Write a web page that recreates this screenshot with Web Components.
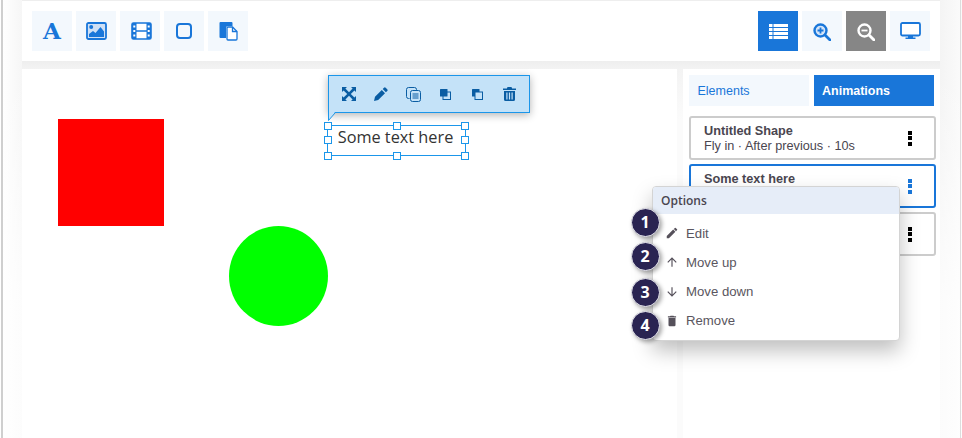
<!DOCTYPE html>
<html><head><meta charset="utf-8"><style>
html,body{margin:0;height:100%;overflow:hidden}
body{background:#fff;font-family:"Liberation Sans",sans-serif;color:#4a4650}
</style></head><body>
<x-app></x-app>
<script>
const I={
image:'<svg viewBox="0 0 21 18" width="21" height="18" style="margin-left:1px"><rect x="1" y="1" width="19" height="16" rx="1.500" fill="#cfe0f5" stroke="#1976d9" stroke-width="1.800"/><circle cx="5.200" cy="5" r="2" fill="#1976d9"/><path d="M3 15v-3l4-3 2.500 2 5-6L18 9.500V15z" fill="#1976d9"/></svg>',
film:'<svg viewBox="0 0 21 18" width="21" height="18" style="margin-left:2px"><rect x="1" y="1" width="19" height="16" rx="1.500" fill="#fff" stroke="#1976d9" stroke-width="1.600"/><path d="M1 1h4.500v16H1zM15.500 1H20v16h-4.500zM5 8.200h11v1.600H5z" fill="#1976d9"/><path d="M2.300 3.500h2v2h-2zM2.300 8h2v2h-2zM2.300 12.500h2v2h-2zM16.700 3.500h2v2h-2zM16.700 8h2v2h-2zM16.700 12.500h2v2h-2z" fill="#fff"/></svg>',
square:'<svg viewBox="0 0 16 16" width="16" height="16"><rect x="1" y="1" width="14" height="14" rx="3" fill="none" stroke="#1976d9" stroke-width="2"/></svg>',
paste:'<svg viewBox="0 0 19 20" width="19" height="20"><path d="M1.500 1h11a1 1 0 0 1 1 1v3H9a2 2 0 0 0-2 2v10H1.500a1 1 0 0 1-1-1V2a1 1 0 0 1 1-1z" fill="#1976d9"/><path d="M8 7a1 1 0 0 1 1-1h4.500L18 10.500V18a1 1 0 0 1-1 1H9a1 1 0 0 1-1-1z" fill="#fff" stroke="#1976d9" stroke-width="1.300"/><path d="M13.500 6v4.500H18" fill="none" stroke="#1976d9" stroke-width="1.300"/></svg>',
list:'<svg viewBox="0 0 19 15" width="19" height="15" fill="#fff"><path d="M0 0h3.500v3H0zM4.500 0H19v3H4.500zM0 4h3.500v3H0zM4.500 4H19v3H4.500zM0 8h3.500v3H0zM4.500 8H19v3H4.500zM0 12h3.500v3H0zM4.500 12H19v3H4.500z"/></svg>',
zoomin:'<svg viewBox="0 0 18 18" width="18" height="18" style="margin-top:2px"><circle cx="7.500" cy="7.500" r="6" fill="#d5e5f8" stroke="#1976d9" stroke-width="2.400"/><path d="M12 12l5 5" stroke="#1976d9" stroke-width="2.800" stroke-linecap="round"/><path d="M4.500 7.500h6M7.500 4.500v6" stroke="#1976d9" stroke-width="1.800"/></svg>',
zoomout:'<svg viewBox="0 0 18 18" width="18" height="18" style="margin-top:2px"><circle cx="7.500" cy="7.500" r="6" fill="#8a8a8a" stroke="#fff" stroke-width="2.400"/><path d="M12 12l5 5" stroke="#fff" stroke-width="2.800" stroke-linecap="round"/><path d="M4.500 7.500h6" stroke="#fff" stroke-width="1.800"/></svg>',
desktop:'<svg viewBox="0 0 21 18" width="21" height="18"><rect x="1" y="1" width="19" height="12.500" rx="1.500" fill="#fff" stroke="#1976d9" stroke-width="1.800"/><path d="M8 14h5v2H8zM5.500 15.500h10V17h-10z" fill="#1976d9"/></svg>',
expand:'<svg viewBox="0 0 14 14" width="14" height="14" fill="#0a5da3"><path d="M0 0h5L3.400 1.600 7 5.200l3.600-3.600L9 0h5v5l-1.600-1.600L8.800 7l3.600 3.600L14 9v5H9l1.600-1.600L7 8.800l-3.600 3.600L5 14H0V9l1.600 1.600L5.200 7 1.600 3.400 0 5z"/></svg>',
pencil:'<svg viewBox="0 0 14 14" width="14" height="14" fill="#0a5da3"><path d="M10 .8a1.200 1.200 0 0 1 1.700 0l1.500 1.500a1.200 1.200 0 0 1 0 1.700l-1.300 1.300-3.200-3.200zM7.800 3l3.200 3.200-6.800 6.800L0 14l1-4.200z"/></svg>',
copy:'<svg viewBox="0 0 15 15" width="15" height="15" fill="none" stroke="#0a5da3"><path d="M3.500 11.500H2.500a2 2 0 0 1-2-2v-7a2 2 0 0 1 2-2h6a2 2 0 0 1 2 2V3.500"/><rect x="4.500" y="3.500" width="10" height="11" rx="2" fill="#c4e2f8"/><path d="M6.500 7h6M6.500 9h6M6.500 11h6" stroke-width="1.200"/></svg>',
front:'<svg viewBox="0 0 11 11" width="11" height="11"><rect x="3" y="3" width="7.500" height="7.500" fill="none" stroke="#0a5da3"/><rect x="0" y="0" width="7.500" height="7.500" rx=".5" fill="#0a5da3"/></svg>',
back:'<svg viewBox="0 0 11 11" width="11" height="11"><rect x="0" y="0" width="7.500" height="7.500" rx=".5" fill="#0a5da3"/><rect x="3" y="3" width="7.500" height="7.500" fill="#c4e2f8" stroke="#0a5da3"/></svg>',
trash:'<svg viewBox="0 0 13 14" width="13" height="14" fill="#0a5da3"><path d="M4.500 0h4l.6 1.500H13V3H0V1.500h3.900z"/><path fill-rule="evenodd" d="M1 4h11v8.500a1.500 1.500 0 0 1-1.500 1.500h-8A1.500 1.500 0 0 1 1 12.500zM3.300 5.500v7h1.200v-7zM5.900 5.500v7h1.200v-7zM8.500 5.500v7h1.200v-7z"/></svg>',
medit:'<svg viewBox="0 0 24 24" width="14" height="14" fill="#55505a"><path d="M3 17.250V21h3.750L17.810 9.940l-3.750-3.750zM20.710 7.040a1 1 0 0 0 0-1.410l-2.340-2.340a1 1 0 0 0-1.410 0l-1.830 1.830 3.750 3.750z"/></svg>',
mup:'<svg viewBox="0 0 24 24" width="14" height="14" fill="#55505a"><path d="M4 12l1.410 1.410L11 7.830V20h2V7.830l5.580 5.590L20 12l-8-8z"/></svg>',
mdown:'<svg viewBox="0 0 24 24" width="14" height="14" fill="#55505a"><path d="M20 12l-1.410-1.410L13 16.170V4h-2v12.170l-5.580-5.590L4 12l8 8z"/></svg>',
mdel:'<svg viewBox="0 0 24 24" width="14" height="14" fill="#55505a"><path d="M6 19a2 2 0 0 0 2 2h8a2 2 0 0 0 2-2V7H6zM19 4h-3.500l-1-1h-5l-1 1H5v2h14z"/></svg>'
};
function def(name,css,html){customElements.define(name,class extends HTMLElement{
  connectedCallback(){if(this.shadowRoot)return;const r=this.attachShadow({mode:'open'});
    r.innerHTML='<style>'+css+'</style>'+(typeof html==='function'?html(this):html);}
});}
def('x-tool',`:host{display:flex;width:40px;height:40px;align-items:center;justify-content:center;background:#f3f8fd;color:#1976d9}
:host([on]){background:#1976d9}:host([grey]){background:#868686}
.a{font:700 23px/40px "DejaVu Serif",serif;color:#1976d9}`,
 h=>h.getAttribute('i')==='A'?'<span class="a">A</span>':I[h.getAttribute('i')]);
def('x-toolbar',`:host{display:flex;justify-content:space-between;background:#fff;height:60px;box-sizing:border-box;padding:10px;margin-top:1px}
.g{display:flex;gap:4px}`,`<div class="g"><x-tool i="A"></x-tool><x-tool i="image"></x-tool><x-tool i="film"></x-tool><x-tool i="square"></x-tool><x-tool i="paste"></x-tool></div>
<div class="g"><x-tool i="list" on></x-tool><x-tool i="zoomin"></x-tool><x-tool i="zoomout" grey></x-tool><x-tool i="desktop"></x-tool></div>`);
def('x-float-bar',`:host{position:absolute;left:306px;top:6px;width:202px;height:38px;box-sizing:border-box;background:#c4e2f8;border:1px solid #1b96ea;box-shadow:0 2px 8px rgba(0,0,0,.3);display:flex;align-items:center;padding-left:4px}
span{width:32px;height:34px;display:flex;align-items:center;justify-content:center;flex:none}`,
 ()=>['expand','pencil','copy','front','back','trash'].map(k=>`<span>${I[k]}</span>`).join('')+
 `<svg viewBox="0 0 10 10" width="10" height="10" style="position:absolute;left:-1px;top:36px"><path d="M.5 0v8.500L7 0" fill="#c4e2f8"/><path d="M.5 0v8.500L7 1" fill="none" stroke="#1b96ea"/></svg>`);
def('x-text-box',`:host{position:absolute;left:305px;top:56px;width:135px;height:29px;padding-right:2px;border:1px solid #1b96ea;font:16.300px/22px "Open Sans",sans-serif;color:#333;display:flex;justify-content:center}
span{display:block}
i{position:absolute;width:6px;height:6px;background:#fff;border:1px solid #1b96ea}`,
 `<span><slot></slot></span>`+[[-4,-4],[65,-4],[133,-4],[-4,10],[133,10],[-4,26],[65,26],[133,26]].map(p=>`<i style="left:${p[0]}px;top:${p[1]}px"></i>`).join(''));
def('x-stage',`:host{display:block;position:relative;width:655px;background:#fff;height:369px;flex:none}
.r{position:absolute;left:36px;top:50px;width:106px;height:107px;background:#f00}
.c{position:absolute;left:207px;top:157px;width:99px;height:100px;border-radius:50%;background:#0f0}`,
 `<div class="r"></div><div class="c"></div><x-float-bar></x-float-bar><x-text-box>Some text here</x-text-box>`);
def('x-tab',`:host{display:flex;align-items:center;width:120px;height:31px;box-sizing:border-box;padding-left:8.500px;font-size:12.500px;background:#f3f8fd;color:#1976d9}
:host([on]){background:#1976d9;color:#fff;font-weight:700;padding-left:8px}`,`<slot></slot>`);
def('x-dots',`:host{display:flex;flex-direction:column;gap:1.500px;color:#000}
b{width:4px;height:4px;background:currentColor;display:block}`,`<b></b><b></b><b></b>`);
def('x-anim-card',`:host{display:flex;align-items:center;justify-content:space-between;width:247px;height:44px;box-sizing:border-box;border:2px solid #ccc;border-radius:3px;padding:0 22px 0 13px;background:#fff;font-size:12.700px;line-height:15px;color:#4a4650}
:host([on]){border-color:#1976d9}
:host([on]) x-dots{color:#1976d9}
b{display:block}
.t{margin-top:2px}`,
 h=>{const t=h.getAttribute('t'),s=h.getAttribute('s');return `<div class="t">${t?`<b>${t}</b>`:''}${s?`<span>${s}</span>`:''}${t&&s?'':'<span style="visibility:hidden">&nbsp;</span>'}</div><x-dots></x-dots>`});
def('x-sidebar',`:host{display:flex;flex-direction:column;width:257px;background:#fff;height:369px;box-sizing:border-box;padding:6px;flex:none}
.tabs{display:flex;justify-content:space-between;width:245px;margin-bottom:10px}
.list{display:flex;flex-direction:column;gap:4px}`,
 `<div class="tabs"><x-tab>Elements</x-tab><x-tab on>Animations</x-tab></div><div class="list">
 <x-anim-card t="Untitled Shape" s="Fly in · After previous · 10s"></x-anim-card>
 <x-anim-card on t="Some text here"></x-anim-card>
 <x-anim-card></x-anim-card></div>`);
def('x-menu-item',`:host{display:flex;align-items:center;height:29.300px;padding-left:12px;font-size:13.200px;color:#5a5660;gap:7px}`,
 h=>I[h.getAttribute('i')]+'<slot></slot>');
def('x-menu',`:host{position:absolute;left:652px;top:186px;width:248px;height:155px;box-sizing:border-box;background:#fff;border:1px solid #d4d4d4;border-radius:4px;box-shadow:0 10px 20px rgba(0,0,0,.25)}
.h{height:27px;background:#e6edf8;font:600 12px/27px "Open Sans",sans-serif;color:#4a4650;padding-left:8px;border-radius:3px 3px 0 0}
.l{padding-top:4.400px}`,
 `<div class="h">Options</div><div class="l"><x-menu-item i="medit">Edit</x-menu-item><x-menu-item i="mup">Move up</x-menu-item><x-menu-item i="mdown">Move down</x-menu-item><x-menu-item i="mdel">Remove</x-menu-item></div>`);
def('x-badge',`:host{position:absolute;width:29px;height:29px;box-sizing:border-box;border-radius:50%;background:#2a2452;color:#fff;border:1px solid #e8e8ee;padding-right:1px;font:700 16px/27px "Open Sans",sans-serif;text-align:center;box-shadow:2px 2px 4px rgba(0,0,0,.35)}`,`<slot></slot>`);
def('x-app',`:host{display:block;position:relative;width:962px;height:438px;box-sizing:border-box;overflow:hidden;background:linear-gradient(rgba(255,255,255,0) 70px,rgba(255,255,255,.7) 300px),linear-gradient(90deg,#fff 2px,#f6f6f6 22px,#f4f4f4 940px,#fafafa 960px)}
.frame{position:absolute;left:1px;top:0;bottom:0;width:1.500px;background:#cfcfcf}
.frame2{position:absolute;left:960px;top:0;bottom:0;width:1px;background:#ddd}
.main{margin-left:22px;width:918px;background:linear-gradient(#eee 61px,#f3f3f3 69px,#fbfbfb 120px);height:438px;display:flex;flex-direction:column}
.row{display:flex;justify-content:space-between;margin-top:8px}`,
 `<div class="frame"></div><div class="frame2"></div><div class="main"><x-toolbar></x-toolbar><div class="row"><x-stage></x-stage><x-sidebar></x-sidebar></div></div>
 <x-menu></x-menu><x-badge style="left:631px;top:208px">1</x-badge><x-badge style="left:631px;top:242px">2</x-badge><x-badge style="left:631px;top:278px">3</x-badge><x-badge style="left:631px;top:311px">4</x-badge>`);
</script>
</body></html>
